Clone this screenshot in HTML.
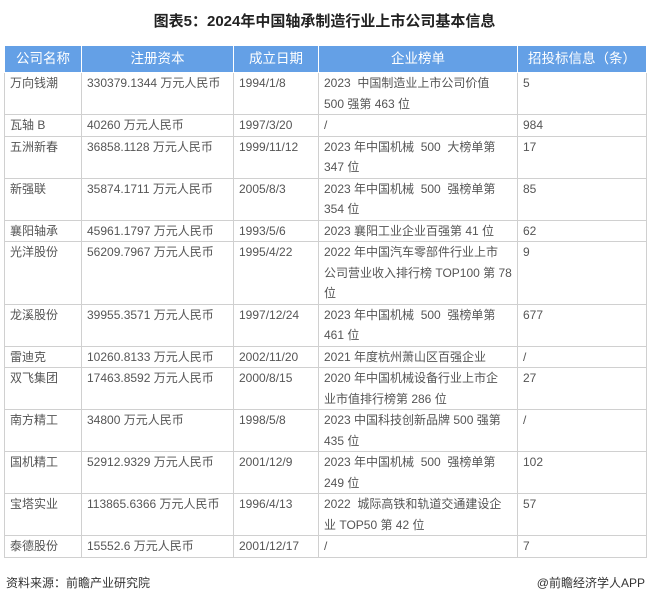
<!DOCTYPE html>
<html><head><meta charset="utf-8"><style>
body{margin:0;width:649px;height:603px;background:#fff;font-family:"Liberation Sans","Noto Sans CJK SC",sans-serif;color:#555;position:relative;overflow:hidden}
h1{position:absolute;top:10px;left:0;width:649px;text-align:center;font-size:15px;font-weight:bold;color:#222;margin:0}
table{position:absolute;left:4px;top:45px;border-collapse:collapse;width:642px;font-size:12px;table-layout:fixed}
td,th{border:1px solid #d0d0d0;padding:0 5px;line-height:20.5px;vertical-align:top;text-align:left;white-space:nowrap;overflow:hidden}
th{background:#64a0e6;color:#fff;font-weight:normal;font-size:13.5px;height:26px;line-height:26px;text-align:center;border-color:#fff}
.f{position:absolute;top:574px;font-size:12px;color:#333}
</style></head><body>
<h1>图表5：2024年中国轴承制造行业上市公司基本信息</h1>
<table>
<colgroup><col style="width:77px"><col style="width:152px"><col style="width:85px"><col style="width:199px"><col style="width:129px"></colgroup>
<tr><th>公司名称</th><th>注册资本</th><th>成立日期</th><th>企业榜单</th><th>招投标信息（条）</th></tr>
<tr><td>万向钱潮</td><td>330379.1344 万元人民币</td><td>1994/1/8</td><td>2023&nbsp; 中国制造业上市公司价值<br>500 强第 463 位</td><td>5</td></tr>
<tr><td>瓦轴 B</td><td>40260 万元人民币</td><td>1997/3/20</td><td>/</td><td>984</td></tr>
<tr><td>五洲新春</td><td>36858.1128 万元人民币</td><td>1999/11/12</td><td>2023 年中国机械&nbsp; 500&nbsp; 大榜单第<br>347 位</td><td>17</td></tr>
<tr><td>新强联</td><td>35874.1711 万元人民币</td><td>2005/8/3</td><td>2023 年中国机械&nbsp; 500&nbsp; 强榜单第<br>354 位</td><td>85</td></tr>
<tr><td>襄阳轴承</td><td>45961.1797 万元人民币</td><td>1993/5/6</td><td>2023 襄阳工业企业百强第 41 位</td><td>62</td></tr>
<tr><td>光洋股份</td><td>56209.7967 万元人民币</td><td>1995/4/22</td><td>2022 年中国汽车零部件行业上市<br>公司营业收入排行榜 TOP100 第 78<br>位</td><td>9</td></tr>
<tr><td>龙溪股份</td><td>39955.3571 万元人民币</td><td>1997/12/24</td><td>2023 年中国机械&nbsp; 500&nbsp; 强榜单第<br>461 位</td><td>677</td></tr>
<tr><td>雷迪克</td><td>10260.8133 万元人民币</td><td>2002/11/20</td><td>2021 年度杭州萧山区百强企业</td><td>/</td></tr>
<tr><td>双飞集团</td><td>17463.8592 万元人民币</td><td>2000/8/15</td><td>2020 年中国机械设备行业上市企<br>业市值排行榜第 286 位</td><td>27</td></tr>
<tr><td>南方精工</td><td>34800 万元人民币</td><td>1998/5/8</td><td>2023 中国科技创新品牌 500 强第<br>435 位</td><td>/</td></tr>
<tr><td>国机精工</td><td>52912.9329 万元人民币</td><td>2001/12/9</td><td>2023 年中国机械&nbsp; 500&nbsp; 强榜单第<br>249 位</td><td>102</td></tr>
<tr><td>宝塔实业</td><td>113865.6366 万元人民币</td><td>1996/4/13</td><td>2022&nbsp; 城际高铁和轨道交通建设企<br>业 TOP50 第 42 位</td><td>57</td></tr>
<tr><td>泰德股份</td><td>15552.6 万元人民币</td><td>2001/12/17</td><td>/</td><td>7</td></tr>
</table>
<div class="f" style="left:6px">资料来源：前瞻产业研究院</div>
<div class="f" style="right:4px">@前瞻经济学人APP</div>
</body></html>
